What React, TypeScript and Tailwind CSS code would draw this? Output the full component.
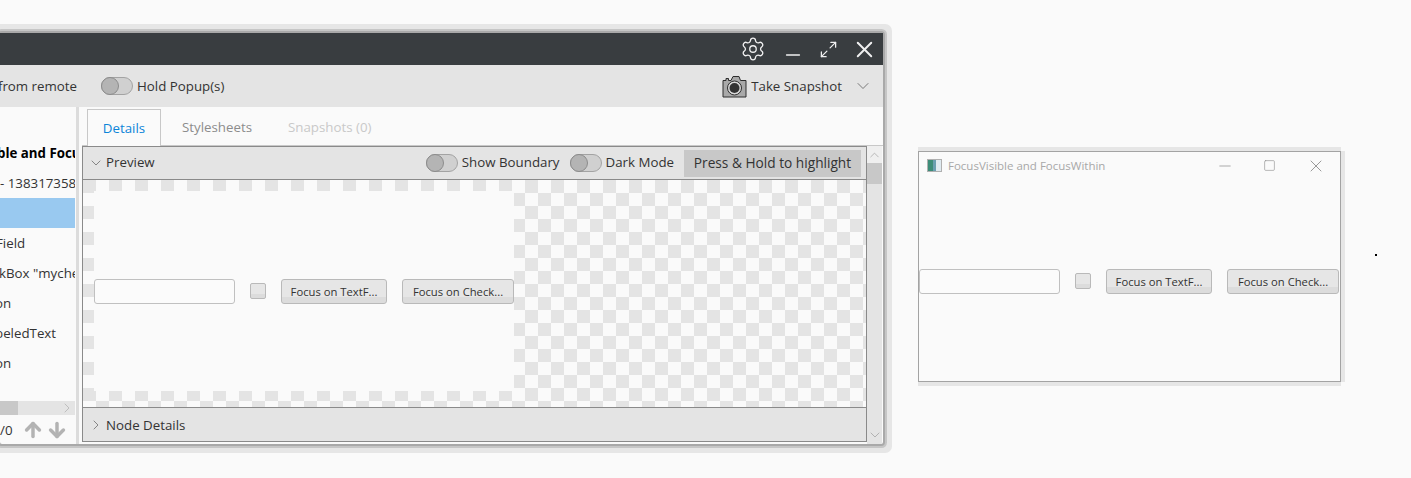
import { ArrowDown, ArrowUp, ChevronDown, ChevronRight, ChevronUp, Maximize2, Minus, Settings, Square, X } from "lucide-react";

const treeRows = [
  { text: "ble and Focus", cls: "font-bold text-black -ml-[3px]", selected: false },
  { text: "- 138317358", cls: "", selected: false },
  { text: "", cls: "", selected: true },
  { text: "Field", cls: "-ml-[4px]", selected: false },
  { text: 'kBox "mycheck', cls: "-ml-[1px]", selected: false },
  { text: "on", cls: "-ml-[5px]", selected: false },
  { text: "beledText", cls: "-ml-[5px]", selected: false },
  { text: "on", cls: "-ml-[5px]", selected: false },
];

function Toggle() {
  return (
    <span className="flex h-[18px] w-[32px] items-center rounded-full border border-[#a3a3a3] bg-[#d0d0d0]">
      <span className="-ml-px h-[18px] w-[18px] rounded-full border border-[#8c8c8c] bg-[#b4b4b4]" />
    </span>
  );
}

function FxButton({ label, width }: { label: string; width: string }) {
  return (
    <div className={`flex h-[25px] items-center justify-center rounded-[3px] border border-[#b9b9b9] bg-[linear-gradient(#e6e6e6_0_17px,#dcdcdc_17px)] pt-[2px] text-[11.25px] text-[#333] ${width}`}>
      {label}
    </div>
  );
}

function DemoScene() {
  return (
    <div className="flex h-[200px] w-[420px] items-center gap-[15px] bg-[#fafafa]">
      <div className="h-[25px] w-[141px] rounded-[3px] border border-[#c0c0c0] bg-[#fbfbfb]" />
      <div className="h-[16px] w-[16px] rounded-[2px] border border-[#b9b9b9] bg-[linear-gradient(#e6e6e6_0_10px,#dcdcdc_10px)]" />
      <FxButton label="Focus on TextF..." width="w-[106px]" />
      <FxButton label="Focus on Check..." width="w-[112px]" />
    </div>
  );
}

function CameraIcon() {
  return (
    <svg width="25" height="23" viewBox="0 0 25 23" className="block">
      <path d="M1 5.5h3V3.5h2.5V5.5h2.5L11 1.5h6L18.5 5.5H24V22H1z" fill="#a9a9a9" stroke="#2e2e2e" strokeWidth="1" />
      <circle cx="12.5" cy="13" r="7" fill="#d8d8d8" stroke="#2e2e2e" strokeWidth="1" />
      <circle cx="12.5" cy="13" r="5" fill="#333" />
    </svg>
  );
}

export default function App() {
  return (
    <div className="relative h-[478px] w-[1411px] overflow-hidden bg-[#fafafa] font-['Open_Sans',sans-serif] text-[13.3px] text-[#333]">
      {/* scenic builder window, cut off by the left edge */}
      <div className="absolute left-0 top-[33px] flex h-[411px] w-[883px] flex-col rounded-[2px] bg-[#fafafa] shadow-[0_0_0_2px_#a9a9a9,0_0_0_4px_#c6c6c6,0_0_0_9px_#e6e6e6]">
        <div className="flex h-[32px] shrink-0 items-center justify-end bg-[#393d40] text-[#f0f0f0]">
          <Settings size={26} strokeWidth={1.2} className="mr-[16px]" />
          <Minus size={22} strokeWidth={1.6} className="mr-[15px] mt-[12px]" />
          <Maximize2 size={19} strokeWidth={1.6} className="mr-[13px]" />
          <X size={27} strokeWidth={1.7} className="mr-[5px]" />
        </div>

        <div className="flex h-[42px] shrink-0 items-center bg-[#e4e4e4]">
          <span className="flex w-[77px] justify-end overflow-hidden whitespace-nowrap pt-[2px]">from remote</span>
          <span className="ml-[24px]"><Toggle /></span>
          <span className="ml-[4px] pt-[2px]">Hold Popup(s)</span>
          <span className="ml-auto"><CameraIcon /></span>
          <span className="ml-[4px] pt-[2px]">Take Snapshot</span>
          <ChevronDown size={20} strokeWidth={0.9} className="ml-[11px] mr-[10px] text-[#555]" />
        </div>

        <div className="flex min-h-0 flex-1">
          <div className="flex w-[76px] shrink-0 flex-col pr-px">
            <div className="h-[31px]" />
            {treeRows.map((row, i) => (
              <div key={i} className={`flex h-[30px] items-center overflow-hidden whitespace-nowrap pt-[2px] ${row.selected ? "bg-[#99c9f0]" : ""}`}>
                <span className={row.cls}>{row.text}</span>
              </div>
            ))}
            <div className="mt-[23px] flex h-[14px] items-center justify-end bg-[#e4e4e4]">
              <div className="mr-auto h-full w-[18px] bg-[#c8c8c8]" />
              <ChevronRight size={16} strokeWidth={1} className="text-[#aaa]" />
            </div>
            <div className="flex h-[29px] items-center whitespace-nowrap">
              <span className="w-[22px] pt-[2px]">/0</span>
              <ArrowUp size={22} strokeWidth={3.8} className="text-[#b3b3b3]" />
              <ArrowDown size={22} strokeWidth={3.8} className="ml-[2px] text-[#b3b3b3]" />
            </div>
          </div>
          <div className="w-[3px] shrink-0 bg-[#dcdcdc]" />

          <div className="flex min-w-0 flex-1 flex-col pl-[3px]">
            <div className="flex h-[39px] shrink-0 items-end border-b border-[#c8c8c8] pl-[5px]">
              <div className="-mb-px flex h-[37px] w-[74px] items-center justify-center border border-b-0 border-[#c8c8c8] bg-[#fafafa] pt-[2px] text-[#0b84d8]">Details</div>
              <div className="ml-[21px] flex h-[36px] items-center pt-[2px] text-[#8c8c8c]">Stylesheets</div>
              <div className="ml-[36px] flex h-[36px] items-center pt-[2px] text-[#c9c9c9]">Snapshots (0)</div>
            </div>

            <div className="flex min-h-0 flex-1 pr-px">
              <div className="flex h-[296px] w-[785px] flex-col border border-[#8a8a8a]">
                <div className="flex h-[33px] shrink-0 items-center border-b border-[#8a8a8a] bg-[#e4e4e4]">
                  <ChevronDown size={16} strokeWidth={1} className="ml-[5px] text-[#555]" />
                  <span className="ml-[2px]">Preview</span>
                  <span className="ml-auto"><Toggle /></span>
                  <span className="ml-[4px]">Show Boundary</span>
                  <span className="ml-[10px]"><Toggle /></span>
                  <span className="ml-[4px]">Dark Mode</span>
                  <div className="ml-[10px] mr-[5px] flex h-[27px] w-[177px] items-center justify-center bg-[#c8c8c8] text-[13.7px]">Press &amp; Hold to highlight</div>
                </div>
                <div className="h-[227px] shrink-0 overflow-hidden bg-[conic-gradient(#fafafa_25%,#e4e4e4_0_50%,#fafafa_0_75%,#e4e4e4_0)] bg-[length:26px_26px] pl-[11px] pt-[11px]">
                  <DemoScene />
                </div>
                <div className="flex flex-1 items-center border-t border-[#8a8a8a] bg-[#e4e4e4] pt-[1px]">
                  <ChevronRight size={16} strokeWidth={1} className="ml-[5px] text-[#555]" />
                  <span className="ml-[2px] pt-[2px]">Node Details</span>
                </div>
              </div>
              <div className="flex w-[15px] shrink-0 flex-col items-center bg-[#e4e4e4] text-[#999]">
                <div className="flex h-[17px] w-full items-center justify-center bg-[#efefef]">
                  <ChevronUp size={16} strokeWidth={1} />
                </div>
                <div className="h-[21px] w-full bg-[#c8c8c8]" />
                <ChevronDown size={16} strokeWidth={1} className="mb-[1px] mt-auto" />
              </div>
            </div>
          </div>
        </div>
      </div>

      {/* the app being inspected */}
      <div className="absolute left-[918px] top-[151px] flex h-[231px] w-[423px] flex-col border border-[#a3a3a3] bg-[#fafafa] shadow-[0_-4px_0_#e6e6e6,4px_0_0_#e6e6e6,0_4px_0_#e6e6e6]">
        <div className="flex h-[29px] shrink-0 items-center pb-[2px] text-[11.5px] text-[#a8a8a8]">
          <span className="ml-[8px] h-[13px] w-[15px] border border-[#b0b0b0] bg-[linear-gradient(90deg,#3d8c78_0_5px,#6a9fb0_5px_8px,#dfeaf0_8px)]" />
          <span className="ml-[6px]">FocusVisible and FocusWithin</span>
          <Minus size={18} strokeWidth={0.8} className="ml-auto text-[#777]" />
          <Square size={13} strokeWidth={1.1} className="ml-[29px] text-[#888]" />
          <X size={20} strokeWidth={0.9} className="ml-[30px] mr-[14px] text-[#777]" />
        </div>
        <DemoScene />
      </div>

      <div className="absolute left-[1375px] top-[254px] h-[2px] w-[2px] bg-black" />
    </div>
  );
}
